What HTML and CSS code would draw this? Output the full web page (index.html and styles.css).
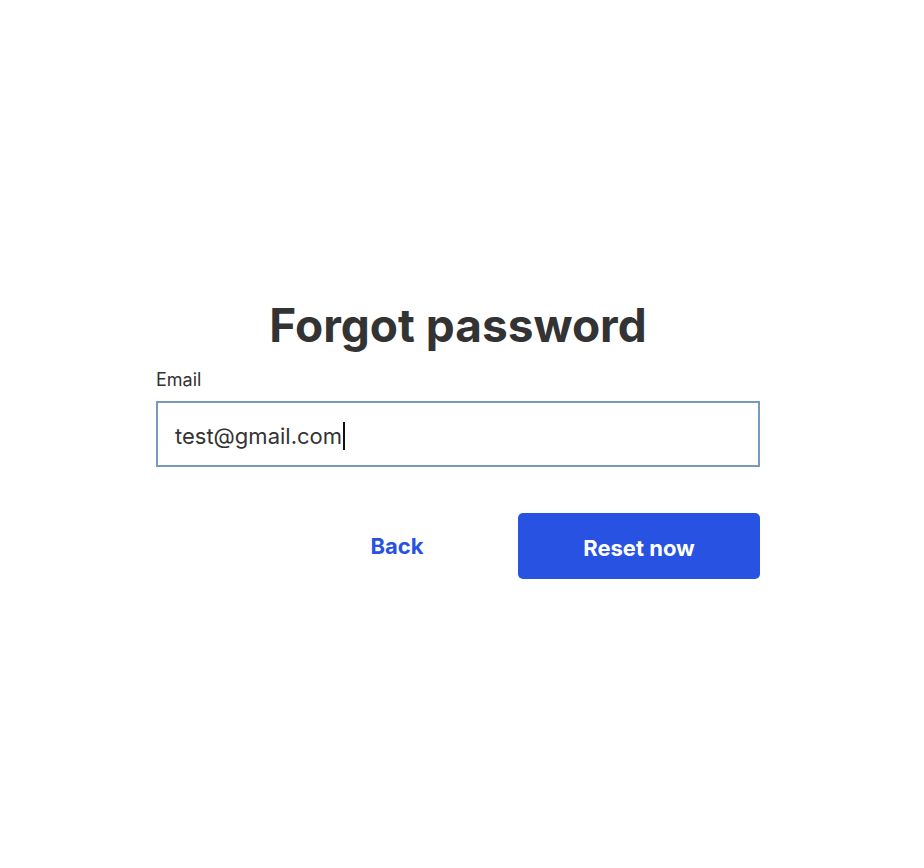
FILE: index.html
```html
<html>

<head>
    <title>Forgot password</title>
    <link rel="stylesheet" href="styles.css">
</head>

<body>
    <div class="page">
        <form class="card">
            <h1 class="title">Forgot password</h1>
            <label class="label" for="email">Email</label>
            <div class="field" id="email">
                <span class="value">test@gmail.com</span><span class="caret"></span>
            </div>
            <div class="actions">
                <button class="btn btn-link" type="button">Back</button>
                <button class="btn btn-primary" type="button">Reset now</button>
            </div>
        </form>
    </div>
</body>

</html>
```

FILE: styles.css
```css
html,
body {
    margin: 0;
    height: 100%;
    background: #FFF;
}

body {
    font-family: 'Inter', 'Liberation Sans', sans-serif;
    color: #333;
}

.page {
    display: flex;
    align-items: center;
    justify-content: center;
    height: 100%;
}

.card {
    width: 604px;
    margin: 0 0 0 -8px;
    padding-top: 6px;
    display: flex;
    flex-direction: column;
}

.title {
    margin: 0 0 14px 0;
    padding-top: 2px;
    text-align: center;
    font-size: 46px;
    line-height: 56px;
    font-weight: 700;
    color: #333;
}

.label {
    font-size: 18px;
    line-height: 22px;
    padding-top: 2px;
    margin-bottom: 10px;
}

.field {
    display: flex;
    align-items: center;
    box-sizing: border-box;
    height: 66px;
    padding: 3px 17px 0 17px;
    border: 2px solid #7A9ABB;
    font-size: 22px;
    color: #333;
}

.caret {
    display: inline-block;
    width: 2px;
    height: 28px;
    margin-left: 1px;
    background: #111;
}

.actions {
    display: flex;
    justify-content: flex-end;
    margin-top: 46px;
}

.btn {
    width: 242px;
    height: 66px;
    border: 0;
    border-radius: 5px;
    font-family: inherit;
    font-size: 22px;
    font-weight: 700;
    cursor: pointer;
}

.btn-link {
    background: none;
    color: #2852E2;
    padding-bottom: 2px;
}

.btn-primary {
    background: #2852E2;
    color: #FFF;
    padding-top: 4px;
}
```
